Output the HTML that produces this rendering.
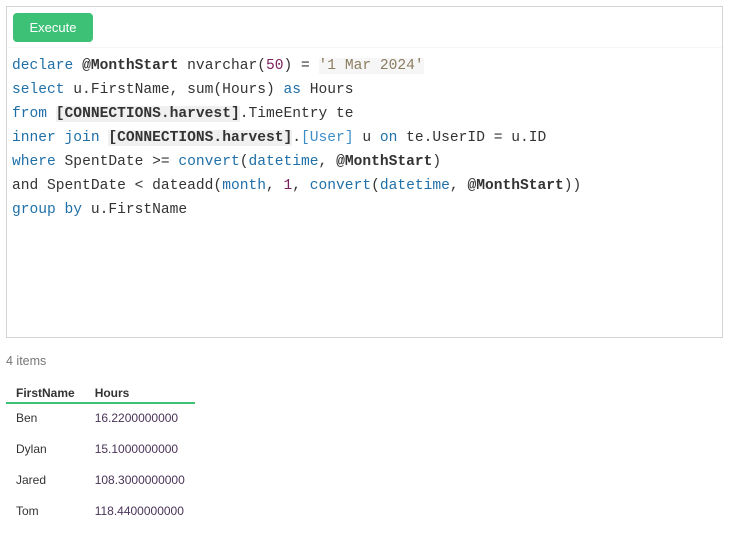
<!DOCTYPE html>
<html><head><style>
body{margin:0;width:730px;height:534px;background:#fff;font-family:"Liberation Sans",sans-serif;position:relative;overflow:hidden}
.box{position:absolute;left:6px;top:6px;width:715px;height:330px;border:1px solid #d4d4d4}
.btn{position:absolute;left:6px;top:6px;width:80px;height:29px;background:#3cc177;border-radius:4px;color:#fff;font-size:13px;line-height:29px;text-align:center}
.top{position:absolute;left:0;top:0;width:715px;height:40px;background:#fff;border-bottom:1px solid #f6f6f6}
pre{position:absolute;left:5px;margin:0;font-family:"Liberation Mono",monospace;font-size:14.6px;line-height:24px;color:#333}
.k{color:#1f6fa8}.b{font-weight:bold;color:#333}.s{color:#8c7d60;background:#f6f6f6}.n{color:#7b1f5e}.g{background:#f0f0f0}.l{color:#3d8ec8}
.items{position:absolute;left:6px;top:354px;font-size:12.5px;color:#777}
table{position:absolute;left:6px;top:383px;border-collapse:collapse;font-size:12px;color:#333}
th{text-align:left;font-weight:bold;height:19px;padding:0 10px;border-bottom:2px solid #3cc177;vertical-align:middle}
td{height:24px;padding:7px 10px 0;vertical-align:top}
td:nth-child(2){color:#4a3358}
</style></head><body>
<div class="box"><div class="top"></div><div class="btn">Execute</div>
<pre style="top:47px"><span class="k">declare</span> <span class="b">@MonthStart</span> nvarchar(<span class="n">50</span>) = <span class="s">'1 Mar 2024'</span>
<span class="k">select</span> u.FirstName, sum(Hours) <span class="k">as</span> Hours
<span class="k">from</span> <span class="g"><b>[CONNECTIONS.harvest]</b></span>.TimeEntry te
<span class="k">inner join</span> <span class="g"><b>[CONNECTIONS.harvest]</b></span>.<span class="l">[User]</span> u <span class="k">on</span> te.UserID = u.ID
<span class="k">where</span> SpentDate &gt;= <span class="k">convert</span>(<span class="k">datetime</span>, <span class="b">@MonthStart</span>)
and SpentDate &lt; dateadd(<span class="k">month</span>, <span class="n">1</span>, <span class="k">convert</span>(<span class="k">datetime</span>, <span class="b">@MonthStart</span>))
<span class="k">group by</span> u.FirstName</pre></div>
<div class="items">4 items</div>
<table><tr><th>FirstName</th><th>Hours</th></tr>
<tr><td>Ben</td><td>16.2200000000</td></tr>
<tr><td>Dylan</td><td>15.1000000000</td></tr>
<tr><td>Jared</td><td>108.3000000000</td></tr>
<tr><td>Tom</td><td>118.4400000000</td></tr></table>
</body></html>
